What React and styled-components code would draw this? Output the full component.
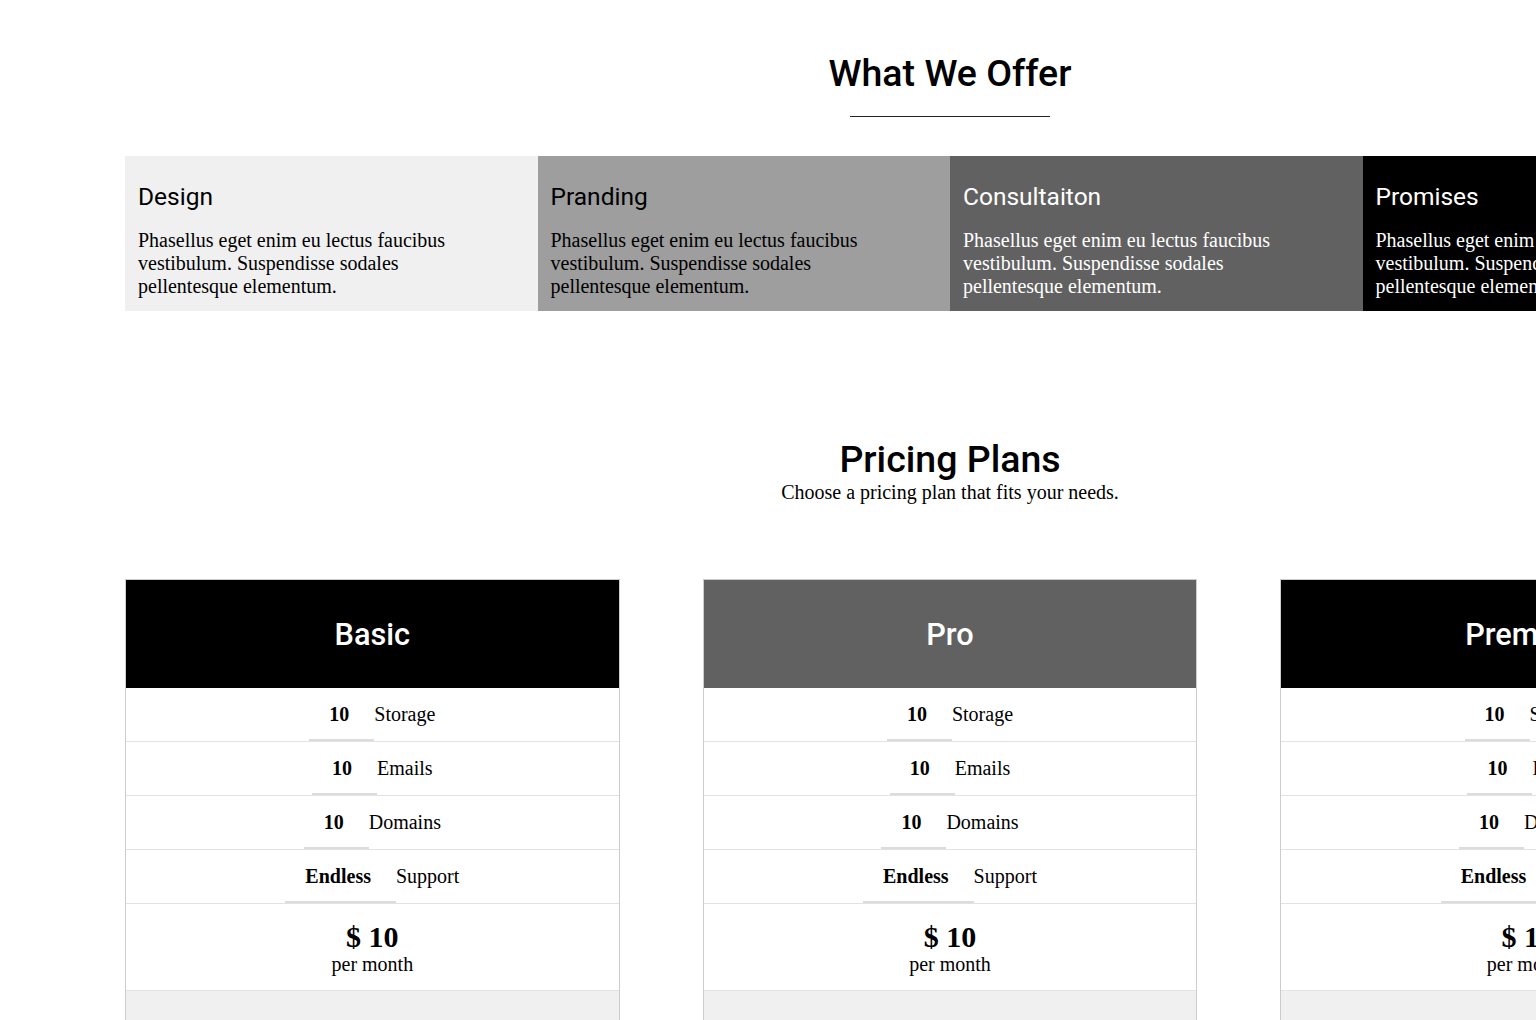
import React from 'react'
import styled, { createGlobalStyle } from 'styled-components'

const GlobalStyle = createGlobalStyle`
  html, body {
    margin: 0;
    padding: 0;
    overflow: hidden;
    background: #fff;
  }
  body {
    font-family: "Liberation Serif", "Times New Roman", serif;
    font-size: 20px;
    color: #000;
  }
`

const Page = styled.div`
  width: 1650px;
  padding-left: 125px;
`

const Section = styled.section`
  display: flex;
  flex-direction: column;
  align-items: center;
  padding-top: ${props => props.top || 0}px;
`

const Heading = styled.h2`
  margin: 0;
  font-family: Roboto, "Liberation Sans", sans-serif;
  font-weight: 500;
  font-size: 37.5px;
  line-height: 42px;
`

const Underline = styled.div`
  width: 200px;
  height: 1px;
  background: #222;
  margin: 22px 0 39px;
`

const Subtitle = styled.p`
  margin: 1px 0 75px;
  font-size: 20px;
  line-height: 23px;
`

const Features = styled.div`
  display: grid;
  grid-template-columns: repeat(4, 1fr);
  width: 100%;
`

const Feature = styled.div`
  background: ${props => props.bg};
  color: ${props => props.fg};
  padding: 27px 13px 13px;
`

const FeatureTitle = styled.h3`
  margin: 0 0 18px;
  font-family: Roboto, "Liberation Sans", sans-serif;
  font-weight: 400;
  font-size: 24.5px;
  line-height: 28px;
`

const FeatureText = styled.p`
  margin: 0;
  max-width: 335px;
  font-size: 20px;
  line-height: 23px;
`

const Plans = styled.div`
  display: grid;
  grid-template-columns: repeat(3, 1fr);
  column-gap: 83px;
  width: 100%;
`

const Plan = styled.div`
  border: 1px solid #ccc;
  background: #fff;
`

const PlanHeader = styled.div`
  height: 108px;
  display: flex;
  align-items: center;
  justify-content: center;
  background: ${props => props.bg};
  color: #fff;
  font-family: Roboto, "Liberation Sans", sans-serif;
  font-weight: 500;
  font-size: 30.7px;
`

const FeatureList = styled.ul`
  list-style: none;
  margin: 0;
  padding: 0;
`

const Row = styled.li`
  display: flex;
  justify-content: center;
  border-bottom: 1px solid #e2e2e2;
  font-size: 20px;
  line-height: 20px;
`

const Amount = styled.strong`
  padding: 16px 25px 15px 20px;
  border-bottom: 2px solid #dcdcdc;
`

const Label = styled.span`
  padding: 16px 0 17px;
`

const Price = styled.div`
  text-align: center;
  padding: 17px 0 14px;
  border-bottom: 1px solid #e4e4e4;
`

const PriceValue = styled.div`
  font-weight: 700;
  font-size: 30px;
  line-height: 32px;
`

const Period = styled.div`
  font-size: 20px;
  line-height: 23px;
`

const PlanFooter = styled.div`
  background: #f0f0f0;
  height: 70px;
`

const features = [
  { title: 'Design', bg: '#f0f0f0', fg: '#000' },
  { title: 'Pranding', bg: '#9e9e9e', fg: '#000' },
  { title: 'Consultaiton', bg: '#616161', fg: '#fff' },
  { title: 'Promises', bg: '#000', fg: '#fff' },
]

const plans = [
  { name: 'Basic', bg: '#000' },
  { name: 'Pro', bg: '#616161' },
  { name: 'Premium', bg: '#000' },
]

const items = [
  ['10', 'Storage'],
  ['10', 'Emails'],
  ['10', 'Domains'],
  ['Endless', 'Support'],
]

export default function App () {
  return (
    <Page>
      <GlobalStyle />
      <Section top={52}>
        <Heading>What We Offer</Heading>
        <Underline />
        <Features>
          {features.map(f => (
            <Feature key={f.title} bg={f.bg} fg={f.fg}>
              <FeatureTitle>{f.title}</FeatureTitle>
              <FeatureText>
                Phasellus eget enim eu lectus faucibus vestibulum. Suspendisse sodales pellentesque elementum.
              </FeatureText>
            </Feature>
          ))}
        </Features>
      </Section>
      <Section top={127}>
        <Heading>Pricing Plans</Heading>
        <Subtitle>Choose a pricing plan that fits your needs.</Subtitle>
        <Plans>
          {plans.map(p => (
            <Plan key={p.name}>
              <PlanHeader bg={p.bg}>{p.name}</PlanHeader>
              <FeatureList>
                {items.map(([amount, label]) => (
                  <Row key={label}>
                    <Amount>{amount}</Amount>
                    <Label>{label}</Label>
                  </Row>
                ))}
              </FeatureList>
              <Price>
                <PriceValue>$ 10</PriceValue>
                <Period>per month</Period>
              </Price>
              <PlanFooter />
            </Plan>
          ))}
        </Plans>
      </Section>
    </Page>
  )
}
